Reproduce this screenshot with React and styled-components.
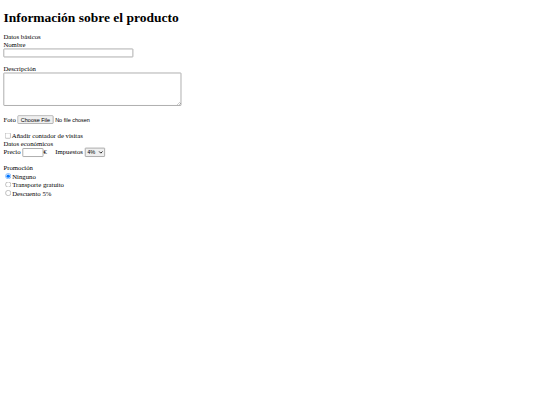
import styled, { createGlobalStyle } from "styled-components";

const Global = createGlobalStyle`
  html, body { margin: 0; padding: 0; background: #fff; }
`;

const Frame = styled.div`
  width: 540px;
  height: 405px;
  overflow: hidden;
`;

// the reference is a 1280px-wide page shrunk down to 540px
const Page = styled.div`
  width: 1280px;
  transform: scale(0.421875);
  transform-origin: 0 0;
  padding: 2px 8px 8px;
  box-sizing: border-box;
  font-family: "Liberation Serif", "Times New Roman", serif;
  font-size: 16px;
  color: #000;
`;

const Title = styled.h1`
  font-size: 2em;
  margin: 0.67em 0 19px;
`;

const Section = styled.div``;

const Line = styled.div``;

const Gap = styled.br``;

const TextInput = styled.input`
  box-sizing: border-box;
  width: ${(p) => p.$w};
  height: 21px;
  border: 2px solid #a0a0a0;
  border-radius: 2px;
  vertical-align: middle;
`;

const TextArea = styled.textarea`
  box-sizing: border-box;
  width: 422px;
  height: 79px;
  border: 2px solid #a0a0a0;
  border-radius: 2px;
`;

const Select = styled.select`
  width: 48px;
  height: 22px;
  border: 2px solid #a0a0a0;
  border-radius: 2px;
  vertical-align: middle;
`;

const FileInput = styled.input`
  font-family: "Liberation Sans", Arial, sans-serif;
  font-size: 13px;
  &::file-selector-button {
    border: 2px solid #a0a0a0;
    border-radius: 3px;
    background: #efefef;
  }
`;

const Choice = styled.input`
  transform: scale(1.05);
`;

const Form = styled.form``;

const App = () => {
  return (
    <Frame>
      <Global />
      <Page>
        <Title>Información sobre el producto</Title>
        <Form>
          <Section>
            <Line>Datos básicos</Line>
            <label>Nombre</label>
            <br />
            <TextInput type="text" $w="308px" />
            <br />
            <Gap />
            <label>Descripción</label>
            <br />
            <TextArea />
            <br />
            <Gap />
            <label>Foto </label>
            <FileInput type="file" />
            <br />
            <Gap />
            <Choice type="checkbox" />
            <label>Añadir contador de visitas</label>
          </Section>
          <Section>
            <Line>Datos económicos</Line>
            <label>Precio </label>
            <TextInput type="text" $w="50px" />€&nbsp;&nbsp;&nbsp;&nbsp;{" "}
            <label>Impuestos </label>
            <Select defaultValue="4">
              <option value="4">4%</option>
              <option value="10">10%</option>
              <option value="21">21%</option>
            </Select>
            <br />
            <Gap />
            <Line>Promoción</Line>
            <Choice type="radio" name="promo" defaultChecked />
            <label>Ninguno</label>
            <br />
            <Choice type="radio" name="promo" />
            <label>Transporte gratuito</label>
            <br />
            <Choice type="radio" name="promo" />
            <label>Descuento 5%</label>
          </Section>
        </Form>
      </Page>
    </Frame>
  );
};

export default App;
